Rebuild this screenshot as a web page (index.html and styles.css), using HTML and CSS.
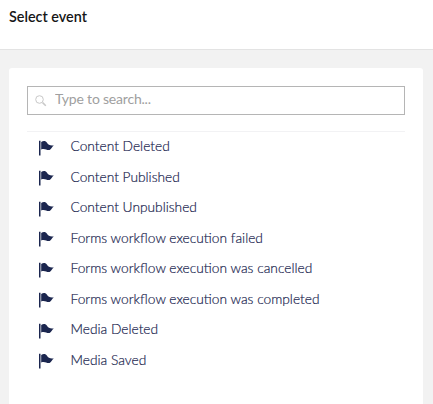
FILE: index.html
```html
<!DOCTYPE html>
<html lang="en">
<head>
<meta charset="utf-8">
<title>Select event</title>
<link rel="stylesheet" href="styles.css">
</head>
<body>
<svg class="defs" aria-hidden="true">
  <symbol id="flag" viewBox="0 0 15 16">
    <path d="M0 .8h1.500v14.700H0z"/>
    <path d="M2.200 2C4.400.6 6.800.8 8 2.800 9.200 4.900 11.400 6 14.800 5.400 13 6.600 12.600 9 10.600 9.900 7.800 10.900 6.600 8 2.200 9.400z"/>
  </symbol>
</svg>
<header class="header"><h1 class="title">Select event</h1></header>
<main class="box">
  <label class="search">
    <svg class="search-icon" viewBox="0 0 12 12"><circle cx="4.500" cy="4.500" r="3.800"/><path class="handle" d="M7.600 7.600l3.200 3.200"/></svg>
    <input class="search-input" type="text" placeholder="Type to search...">
  </label>
  <ul class="list">
    <li class="item"><svg class="flag"><use href="#flag"/></svg><span class="name">Content Deleted</span></li>
    <li class="item"><svg class="flag"><use href="#flag"/></svg><span class="name">Content Published</span></li>
    <li class="item"><svg class="flag"><use href="#flag"/></svg><span class="name">Content Unpublished</span></li>
    <li class="item"><svg class="flag"><use href="#flag"/></svg><span class="name">Forms workflow execution failed</span></li>
    <li class="item"><svg class="flag"><use href="#flag"/></svg><span class="name">Forms workflow execution was cancelled</span></li>
    <li class="item"><svg class="flag"><use href="#flag"/></svg><span class="name">Forms workflow execution was completed</span></li>
    <li class="item"><svg class="flag"><use href="#flag"/></svg><span class="name">Media Deleted</span></li>
    <li class="item"><svg class="flag"><use href="#flag"/></svg><span class="name">Media Saved</span></li>
  </ul>
</main>
</body>
</html>
```
FILE: styles.css
```css
* { box-sizing: border-box; }
body {
  margin: 0;
  height: 404px;
  display: flex;
  flex-direction: column;
  overflow: hidden;
  background: #f2f2f2;
  font-family: Lato, "Liberation Sans", sans-serif;
  font-size: 14px;
  color: #1b264f;
}
.defs { display: none; }
.header {
  flex: none;
  height: 50px;
  padding: 7px 9px;
  background: #fff;
  border-bottom: 1px solid #e3e3e3;
}
.title { margin: 0; font-size: 14.400px; line-height: 20px; font-weight: 600; color: #161616; }
.box {
  flex: 1;
  margin: 18px 10px 0 9px;
  padding: 18px;
  background: #fff;
  border-radius: 3px 3px 0 0;
}
.search {
  display: flex;
  align-items: center;
  height: 29px;
  padding: 0 7px;
  border: 1px solid #b5b5b5;
}
.search-icon { width: 12px; height: 12px; fill: none; stroke: #c8c8c8; stroke-width: 1; }
.handle { stroke-width: 1.500; }
.search-input {
  flex: 1;
  margin: 0 0 4px 8px;
  padding: 0;
  border: 0;
  outline: 0;
  font: inherit;
  letter-spacing: -.2px;
  background: none;
}
.search-input::placeholder { color: #a0a0a0; opacity: 1; }
.list { margin: 16px 0 0; padding: 0; list-style: none; border-top: 1px solid #f2f2f4; }
.item { display: flex; align-items: center; height: 30.5px; padding-left: 12px; }
.flag { width: 15px; height: 16px; margin-top: 1px; fill: #1b264f; }
.name {
  margin: 0 0 2px 16.500px;
  font-size: 13.750px;
  line-height: 20px;
  font-weight: 300;
  -webkit-text-stroke: .2px #1b264f;
}
```
